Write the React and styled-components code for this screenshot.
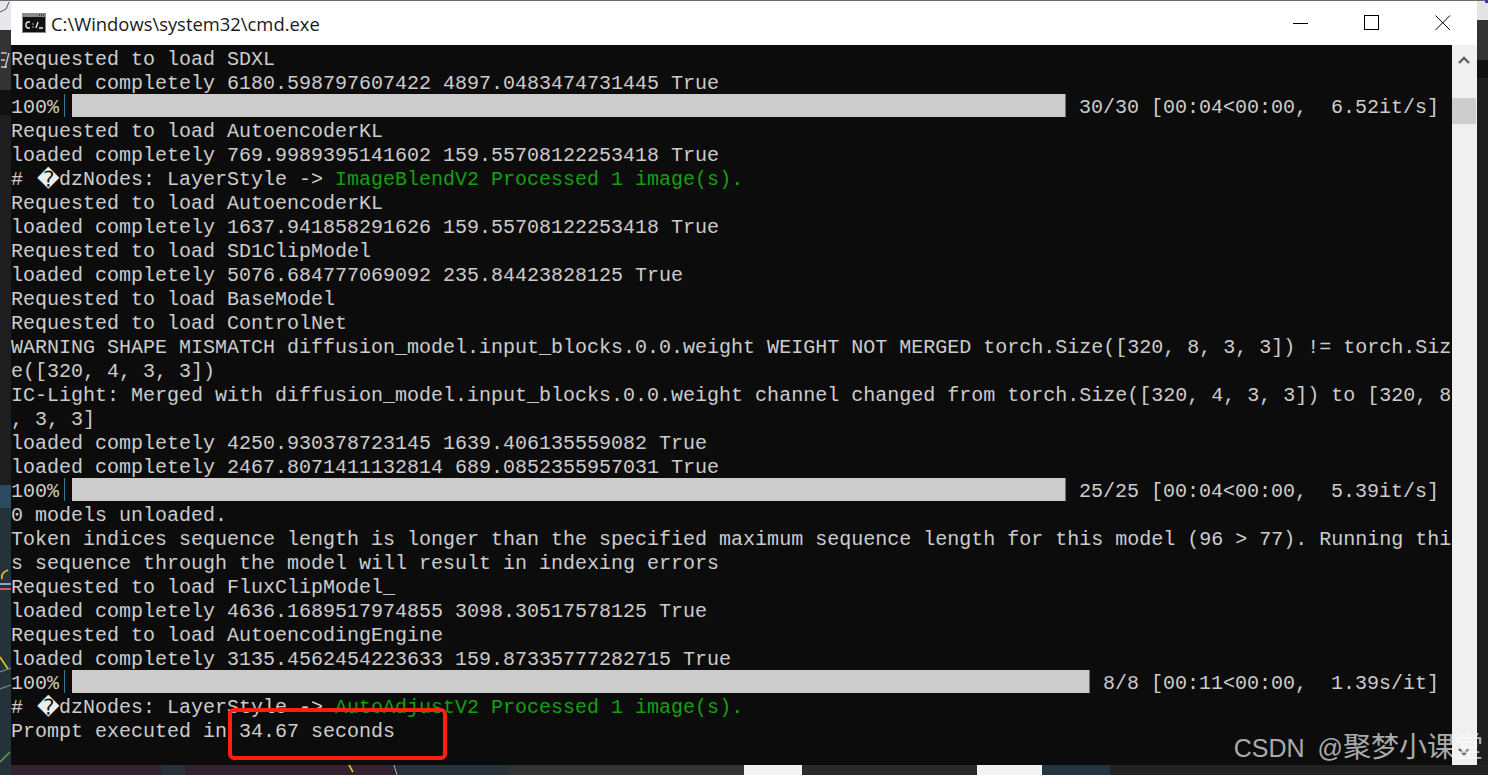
import React from "react";
import styled, { createGlobalStyle } from "styled-components";

const GlobalStyle = createGlobalStyle`
  html, body {
    margin: 0;
    padding: 0;
    background: #1e1e1e;
    overflow: hidden;
  }
`;

const PROGRESS = "progress";

const lines = [
  { text: "Requested to load SDXL" },
  { text: "loaded completely 6180.598797607422 4897.0483474731445 True" },
  { type: PROGRESS, bar: 994, gap: 13, text: "30/30 [00:04<00:00,  6.52it/s]" },
  { text: "Requested to load AutoencoderKL" },
  { text: "loaded completely 769.9989395141602 159.55708122253418 True" },
  { type: "node", green: "ImageBlendV2 Processed 1 image(s)." },
  { text: "Requested to load AutoencoderKL" },
  { text: "loaded completely 1637.941858291626 159.55708122253418 True" },
  { text: "Requested to load SD1ClipModel" },
  { text: "loaded completely 5076.684777069092 235.84423828125 True" },
  { text: "Requested to load BaseModel" },
  { text: "Requested to load ControlNet" },
  { text: "WARNING SHAPE MISMATCH diffusion_model.input_blocks.0.0.weight WEIGHT NOT MERGED torch.Size([320, 8, 3, 3]) != torch.Siz" },
  { text: "e([320, 4, 3, 3])" },
  { text: "IC-Light: Merged with diffusion_model.input_blocks.0.0.weight channel changed from torch.Size([320, 4, 3, 3]) to [320, 8" },
  { text: ", 3, 3]" },
  { text: "loaded completely 4250.930378723145 1639.406135559082 True" },
  { text: "loaded completely 2467.8071411132814 689.0852355957031 True" },
  { type: PROGRESS, bar: 994, gap: 13, text: "25/25 [00:04<00:00,  5.39it/s]" },
  { text: "0 models unloaded." },
  { text: "Token indices sequence length is longer than the specified maximum sequence length for this model (96 > 77). Running thi" },
  { text: "s sequence through the model will result in indexing errors" },
  { text: "Requested to load FluxClipModel_" },
  { text: "loaded completely 4636.1689517974855 3098.30517578125 True" },
  { text: "Requested to load AutoencodingEngine" },
  { text: "loaded completely 3135.4562454223633 159.87335777282715 True" },
  { type: PROGRESS, bar: 1018, gap: 13, text: "8/8 [00:11<00:00,  1.39s/it]" },
  { type: "node", green: "AutoAdjustV2 Processed 1 image(s)." },
  { text: "Prompt executed in 34.67 seconds" },
];

const CmdIcon = () => (
  <svg width="24" height="20" viewBox="0 0 24 20">
    <rect x="0" y="0" width="24" height="20" fill="#8a8a8a" />
    <rect x="1" y="4" width="22" height="15" fill="#111" />
    <rect x="17" y="1" width="1" height="2" fill="#444" />
    <rect x="19" y="1" width="1" height="2" fill="#444" />
    <rect x="21" y="1" width="1" height="2" fill="#444" />
    <path
      d="M8 9H5.5L4 10.5v3L5.5 15H8M11 10.5v1M11 13.5v1M16 9l-2 6M17 15h4"
      fill="none"
      stroke="#e8e8e8"
      strokeWidth="1.4"
    />
  </svg>
);

// bits of the desktop wallpaper that peek out round the window
const Wallpaper = () => (
  <WallpaperArt width="1488" height="775" viewBox="0 0 1488 775">
    <path d="M0 12L6 9L9 2" fill="none" stroke="#555" strokeWidth="1" />
    <path d="M1 53H7M1 60H5M1 67H7M9 53L5 68" fill="none" stroke="#c8c8c8" strokeWidth="1.4" />
    <path d="M8 570C3 572 1 575 2 579" fill="none" stroke="#e8c020" strokeWidth="1.6" />
    <path d="M0 584H11" stroke="#8fa8b8" strokeWidth="2" />
    <path d="M0 589H11" stroke="#e05060" strokeWidth="2" />
    <path d="M0 657L8 669" fill="none" stroke="#e8c020" strokeWidth="1.6" />
    <path d="M0 672L11 668M0 689L11 685" fill="none" stroke="#7a8a80" strokeWidth="1.2" />
    <path d="M0 762L10 752" fill="none" stroke="#6aa060" strokeWidth="1.4" />
    <path d="M349 765L353 772" stroke="#e8c020" strokeWidth="1.6" />
    <path d="M394 765L397 775" stroke="#a090c0" strokeWidth="1.2" />
    <rect x="1485" y="0" width="3" height="3" fill="#2a40c0" />
  </WallpaperArt>
);

const App = () => {
  return (
    <>
      <GlobalStyle />
      <Desktop>
        <Wallpaper />
        <Window>
          <TitleBar>
            <TitleLeft>
              <CmdIcon />
              <TitleText>C:\Windows\system32\cmd.exe</TitleText>
            </TitleLeft>
            <WindowControls>
              <ControlButton>
                <svg width="16" height="16" viewBox="0 0 16 16">
                  <path d="M0 8.5H15" stroke="#000" strokeWidth="1" />
                </svg>
              </ControlButton>
              <ControlButton>
                <svg width="16" height="16" viewBox="0 0 16 16">
                  <rect x="0.5" y="0.5" width="14" height="14" fill="none" stroke="#000" strokeWidth="1" />
                </svg>
              </ControlButton>
              <ControlButton>
                <svg width="16" height="16" viewBox="0 0 16 16">
                  <path d="M0.5 0.5L15 15M15 0.5L0.5 15" stroke="#000" strokeWidth="1" />
                </svg>
              </ControlButton>
            </WindowControls>
          </TitleBar>
          <Body>
            <Console>
              {lines.map((line, i) => {
                if (line.type === PROGRESS) {
                  return (
                    <Row key={i}>
                      <span>100%</span>
                      <Pipe />
                      <Bar $width={line.bar} />
                      <ProgressText $gap={line.gap}>{line.text}</ProgressText>
                    </Row>
                  );
                }
                if (line.type === "node") {
                  return (
                    <Row key={i}>
                      <span># </span>
                      <BadChar>{"\uFFFD"}</BadChar>
                      <span>dzNodes: LayerStyle -&gt; </span>
                      <Green>{line.green}</Green>
                    </Row>
                  );
                }
                return <Row key={i}>{line.text}</Row>;
              })}
            </Console>
            <Scrollbar>
              <ArrowSlot $top>
                <svg width="12" height="8" viewBox="0 0 12 8">
                  <path d="M1 7L6 2L11 7" fill="none" stroke="#606060" strokeWidth="2.4" />
                </svg>
              </ArrowSlot>
              <Thumb />
              <ArrowSlot>
                <svg width="12" height="8" viewBox="0 0 12 8">
                  <path d="M1 1L6 6L11 1" fill="none" stroke="#606060" strokeWidth="2.4" />
                </svg>
              </ArrowSlot>
            </Scrollbar>
          </Body>
          <Highlight />
          <Watermark>
            CSDN @<WatermarkCjk>聚梦小课堂</WatermarkCjk>
          </Watermark>
        </Window>
      </Desktop>
    </>
  );
};

const Desktop = styled.div`
  position: relative;
  width: 1488px;
  height: 775px;
  box-sizing: border-box;
  padding: 1px 11px 10px 11px;
  background-color: #1e1e1e;
  background-image:
    linear-gradient(#6a6a6a, #6a6a6a),
    linear-gradient(
      to right,
      #25323a 0 11px,
      #33222f 11px 161px,
      #25323a 161px 185px,
      #33222f 185px 396px,
      #25323a 396px 508px,
      #333333 508px 744px,
      #f2f2f2 744px 802px,
      #2a2a2a 802px 977px,
      #f2f2f2 977px 1042px,
      #253540 1042px 1110px,
      #222222 1110px 1488px
    ),
    linear-gradient(
      to bottom,
      #e8e8ec 0 30px,
      #333333 30px 90px,
      #111111 90px 115px,
      #1e1e1e 115px 485px,
      #2c4a60 485px 508px,
      #25323a 508px 775px
    ),
    linear-gradient(
      to bottom,
      #e4e4e4 0 20px,
      #333333 20px 60px,
      #111111 60px 78px,
      #1e1e1e 78px 775px
    );
  background-repeat: no-repeat;
  background-size:
    100% 1px,
    100% 10px,
    11px 100%,
    11px 100%;
  background-position:
    0 0,
    0 100%,
    0 0,
    100% 0;
`;

const WallpaperArt = styled.svg`
  position: absolute;
  left: 0;
  top: 0;
`;

const Window = styled.div`
  position: relative;
  display: flex;
  flex-direction: column;
  height: 100%;
`;

const TitleBar = styled.div`
  flex: 0 0 44px;
  display: flex;
  align-items: center;
  justify-content: space-between;
  background: #ffffff;
`;

const TitleLeft = styled.div`
  display: flex;
  align-items: center;
  gap: 5px;
  padding-left: 11px;
`;

const TitleText = styled.span`
  font-family: "Open Sans", "Noto Sans", sans-serif;
  font-size: 18.4px;
  color: #1a1a1a;
  white-space: pre;
`;

const WindowControls = styled.div`
  display: flex;
  align-items: center;
  padding-right: 26px;
  gap: 55px;
`;

const ControlButton = styled.div`
  display: flex;
  width: 16px;
  height: 16px;
`;

const Body = styled.div`
  flex: 1;
  display: flex;
  min-height: 0;
`;

const Console = styled.div`
  flex: 1;
  background: #0c0c0c;
  color: #cccccc;
  font-family: "Liberation Mono", "DejaVu Sans Mono", monospace;
  font-size: 20px;
  line-height: 24px;
  padding-top: 3px;
  overflow: hidden;
`;

const Row = styled.div`
  display: flex;
  height: 24px;
  white-space: pre;
`;

const Pipe = styled.span`
  width: 1px;
  height: 23px;
  margin: -2px 7px 0 5px;
  background: #2f7ea0;
`;

const Bar = styled.span`
  box-sizing: border-box;
  width: ${(p) => p.$width}px;
  height: 23px;
  margin-top: -2px;
  background: #cccccc;
  border-right: 1px solid #a5652a;
`;

const ProgressText = styled.span`
  margin-left: ${(p) => p.$gap}px;
`;

const BadChar = styled.span`
  box-sizing: border-box;
  width: 24px;
  padding-left: 2px;
  font-family: "DejaVu Sans", sans-serif;
  font-size: 22px;
  color: #ededed;
`;

const Green = styled.span`
  color: #13a10e;
`;

const Scrollbar = styled.div`
  flex: 0 0 25px;
  display: flex;
  flex-direction: column;
  background: #f0f0f0;
`;

const ArrowSlot = styled.div`
  box-sizing: border-box;
  height: 24px;
  display: flex;
  align-items: center;
  justify-content: center;
  padding-top: ${(p) => (p.$top ? "6px" : "0")};
  margin-top: ${(p) => (p.$top ? "0" : "auto")};
  margin-bottom: ${(p) => (p.$top ? "0" : "1px")};
  padding-right: 1px;
`;

const Thumb = styled.div`
  width: 24px;
  height: 26px;
  margin-top: 29px;
  background: #cdcdcd;
`;

const Highlight = styled.div`
  position: absolute;
  left: 217px;
  top: 707px;
  width: 219px;
  height: 52px;
  box-sizing: border-box;
  border: 4px solid #fb2012;
  border-radius: 6px;
`;

const Watermark = styled.div`
  position: absolute;
  right: -6px;
  top: 728px;
  font-family: "Liberation Sans", "Noto Sans CJK SC", sans-serif;
  font-size: 25px;
  line-height: 32px;
  word-spacing: 6px;
  color: rgba(255, 255, 255, 0.66);
  white-space: pre;
`;

const WatermarkCjk = styled.span`
  font-family: "Noto Sans CJK SC", sans-serif;
  font-size: 28px;
`;

export default App;
